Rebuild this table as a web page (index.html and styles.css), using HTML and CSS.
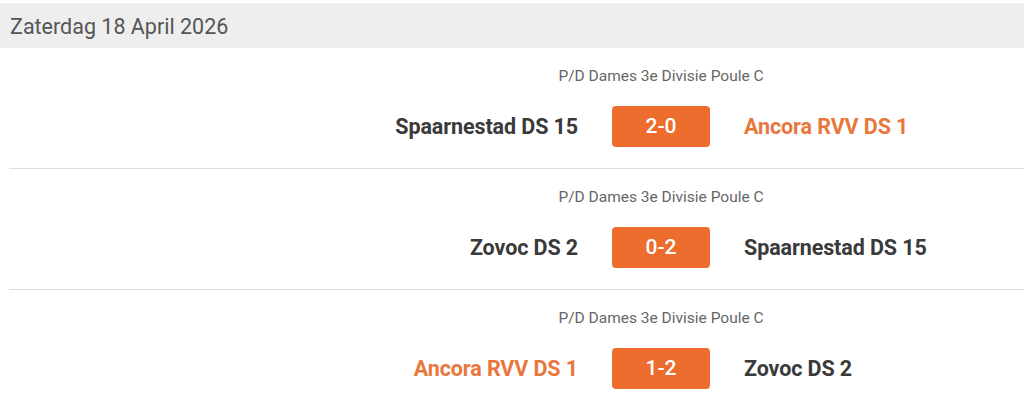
FILE: index.html
```html
<!DOCTYPE html>
<html lang="nl">
<head>
<meta charset="utf-8">
<title>Uitslagen</title>
<link rel="stylesheet" href="styles.css">
</head>
<body>
<div class="day">
  <div class="day-header">Zaterdag 18 April 2026</div>
  <div class="matches">
    <div class="match">
      <div class="competition"><span>P/D Dames 3e Divisie Poule C</span></div>
      <div class="team home">Spaarnestad DS 15</div>
      <div class="score">2-0</div>
      <div class="team away highlight">Ancora RVV DS 1</div>
    </div>
    <div class="match">
      <div class="competition"><span>P/D Dames 3e Divisie Poule C</span></div>
      <div class="team home">Zovoc DS 2</div>
      <div class="score">0-2</div>
      <div class="team away">Spaarnestad DS 15</div>
    </div>
    <div class="match">
      <div class="competition"><span>P/D Dames 3e Divisie Poule C</span></div>
      <div class="team home highlight">Ancora RVV DS 1</div>
      <div class="score">1-2</div>
      <div class="team away">Zovoc DS 2</div>
    </div>
  </div>
</div>
</body>
</html>
```
FILE: styles.css
```css
html, body {
  margin: 0;
  padding: 0;
  background: #ffffff;
}
body {
  font-family: Roboto, "Noto Sans", sans-serif;
  color: #3a3a3a;
  padding-top: 3px;
}
.day-header {
  background: #eeeeee;
  height: 45px;
  line-height: 47px;
  padding-left: 10px;
  font-size: 21.5px;
  color: #555555;
}
.matches {
  padding-left: 9px;
}
.match {
  display: grid;
  grid-template-columns: 1fr 98px 280px;
  column-gap: 34px;
  row-gap: 20px;
  padding: 18px 0 21px;
  border-bottom: 1px solid #dddddd;
  align-items: center;
}
.match:last-child {
  border-bottom: none;
}
.competition {
  grid-column: 2;
  display: flex;
  justify-content: center;
  white-space: nowrap;
  font-size: 15.5px;
  line-height: 20px;
  color: #666666;
}
.team {
  font-size: 21.5px;
  font-weight: 700;
  color: #3a3a3a;
  white-space: nowrap;
  letter-spacing: -0.1px;
}
.home {
  grid-column: 1;
  text-align: right;
}
.away {
  grid-column: 3;
}
.highlight {
  color: #e8773c;
}
.score {
  grid-column: 2;
  height: 41px;
  line-height: 41px;
  border-radius: 4px;
  background: #ec6d2e;
  color: #ffffff;
  text-align: center;
  font-size: 21px;
  font-weight: 500;
}
```
